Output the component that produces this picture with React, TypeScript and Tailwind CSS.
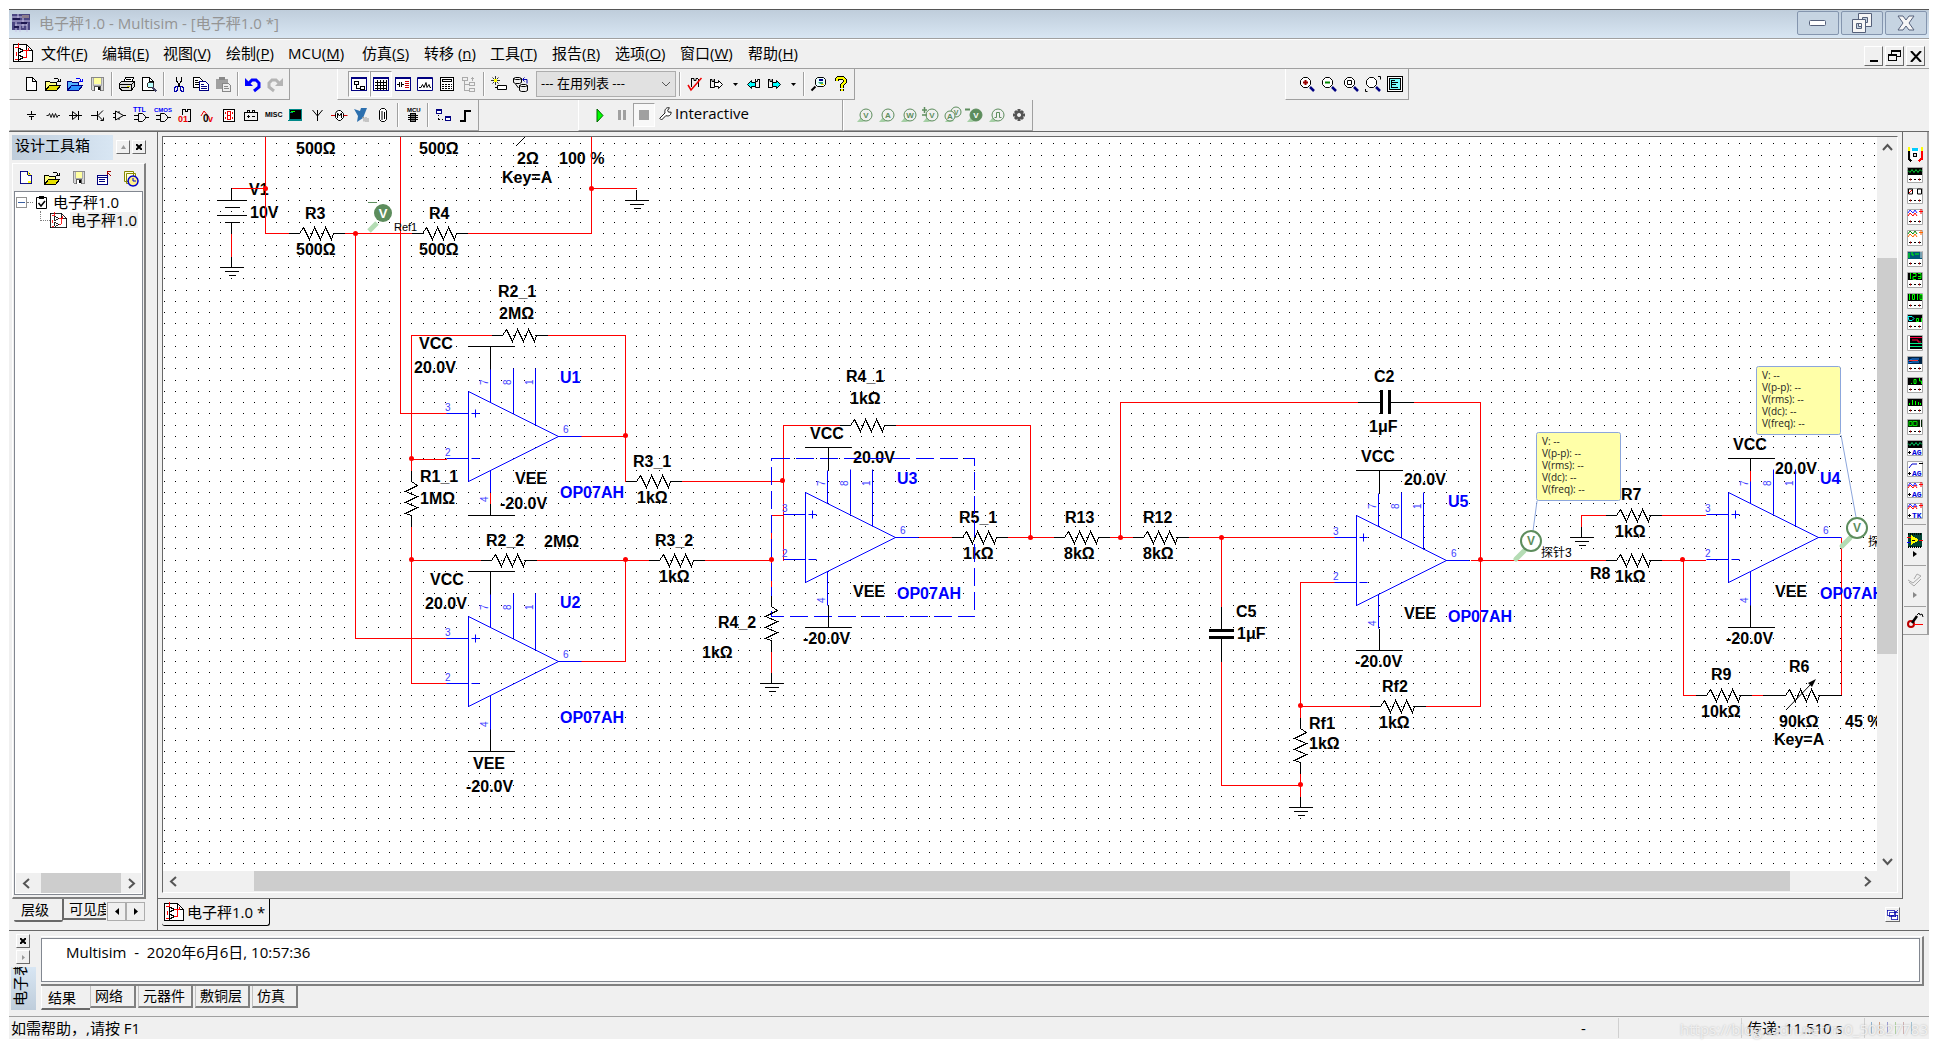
import React from "react";

type Shape = [d: string, stroke: string, fill?: string, width?: number];
type Label = [x: number, y: number, text: string, color: string, size?: number];
type IconDef = { s: Shape[]; t?: Label[]; smooth?: boolean };

const K = "#000";
const NAVY = "#000080";

const ICONS: Record<string, IconDef> = {
  fresh: { s: [["M3.5 1.5h6l4 4v9h-10z", K, "#fff"], ["M9.5 1.5v4h4", K]] },
  freshYellow: { s: [["M2.5 1.5h8l4 4v9h-12z", NAVY, "#fff"], ["M10.5 1.5v4h4", NAVY], ["M11 12h3v2h-3z", "none", "#ff0"], ["M11 2h1v2h2v1h-3z", "none", "#ff0"]] },
  open: { s: [["M.5 14.5v-9h4l1 1h6v3", K, "#ffff80"], ["M.5 14.5l4-5h11l-4 5z", K, "#e6e000"], ["M8.5 3.5l1-1h3l1 1v2", K], ["M11.5 5.5h4M15.5 2.5v3", K]] },
  openBlue: { s: [["M.5 14.5v-9h4l1 1h6v3", NAVY, "#55b4ff"], ["M.5 14.5l4-5h11l-4 5z", NAVY, "#2b95ff"], ["M8.5 3.5l1-1h3l1 1v2", "#00f"], ["M11.5 5.5h4M15.5 2.5v3", "#00f"]] },
  save: { s: [["M2.5 1.5h12v13h-11l-1-1z", "#888", "#d8d8d8"], ["M5 2h7v6h-7z", "none", "#ffffa0"], ["M4.5 2v7h8v-7", "#aaa"], ["M5.5 14.5v-4h6v4", "#555", "#fff"], ["M9 11h2v3h-2z", "none", K]] },
  print: { s: [["M4.5 6.5l2-5h8l-2 5", K, "#fff"], ["M7 3.5h5M6.5 5.5h5", K], ["M.5 7.5l2-2h13v5l-3 3.5h-10l-2-2z", K, "#ddd"], ["M.5 8.5h12l3-3M12.5 8.5v5", K], ["M2 11.5h8", K], ["M8 10h3v1h-3z", "none", "#cc0"]] },
  preview: { s: [["M1.5 1.5h7l4 4v9h-11z", K, "#fff"], ["M8.5 1.5v4h4", K], ["M7.5 6.5h4l1 1v3l-1 1h-4l-1-1v-3z", "#333", "#bff"], ["M11.5 11.5l4 4", "#446", "none", 2]] },
  cut: { s: [["M5.5 1v4l3 4v2M10.5 1v4l-3 4v2", K], ["M3.5 12.5l1-2h2v3l-1 2h-2zM9.5 10.5h2l1 2v3h-2l-1-2z", "#00a"]] },
  copy: { s: [["M.5 1.5h6l3 3v7h-9z", K, "#fff"], ["M2 4.5h3M2 6.5h5M2 8.5h4", K], ["M6.5 5.5h6l3 3v6h-9z", NAVY, "#fff"], ["M8 8.5h3M8 10.5h6M8 12.5h6", NAVY]] },
  paste: { s: [["M1 3h12v10h-12z", "none", "#a0a0a0"], ["M4 1h6v3h-6z", "none", "#888"], ["M7.5 7.5h6l2 2v6h-8z", "#888", "#eee"], ["M9 10.5h4M9 12.5h5", "#888"]] },
  undo: { s: [["M4 7l3-3h4l3 3v4l-5 4", "#00f", "none", 3], ["M0 2v8h8l-3-3z", "none", "#00f"]], smooth: true },
  redo: { s: [["M12 7l-3-3H5L2 7v4l5 4", "#b4b4b4", "none", 3], ["M16 2v8H8l3-3z", "none", "#b4b4b4"]], smooth: true },
  hierarchy: { s: [["M.5 1.5h15v13h-15z", NAVY, "#fff"], ["M.5 2.5h15", NAVY], ["M3.5 5.5h4v3h-4zM9.5 10.5h4v3h-4z", K], ["M5.5 9v3h4", K]] },
  sheet: { s: [["M.5 1.5h15v13h-15z", NAVY, "#fff"], ["M.5 2.5h15", NAVY], ["M2 6.5h12M2 9.5h12M2 12.5h12M4.5 4v10M7.5 4v10M10.5 4v10M13.5 4v10", K]] },
  spice: { s: [["M.5 1.5h15v13h-15z", NAVY, "#fff"], ["M.5 2.5h15", NAVY], ["M2 8.5h2M4.5 6v5M6.5 6v5M6.5 8.5h2", K], ["M10 5.5h4M10 7.5h4M10 9.5h4M10 11.5h4", "#c00"]] },
  grapher: { s: [["M.5 1.5h15v13h-15z", NAVY, "#fff"], ["M.5 2.5h15", NAVY], ["M2 11.5h2l1.500-3 1.500 3 2-5 1 5 2-3 1 3h1", K]], smooth: true },
  calc: { s: [["M1.5 1.5h13v13h-13z", K, "#fff"], ["M3.5 3.5h9v2h-9z", K], ["M3 8.5h2M6 8.5h2M9 8.5h2M12 8.5h1M3 10.5h2M6 10.5h2M9 10.5h2M12 10.5h1M3 12.5h2M6 12.5h2M9 12.5h2M12 12.5h1", K]] },
  tree: { s: [["M1.5 1.5h5v3h-5zM8.5 6.5h5v3h-5zM8.5 12.5h5v3h-5z", "#aaa"], ["M3.5 5v9h5M4 8.5h4", "#aaa"], ["M11.5 5v-4M9.5 3.5l2-2 2 2", "#aaa"]] },
  spark: { s: [["M4.5 0v9M0 4.5h9M1.500 1.500l6 6M7.500 1.500l-6 6", K, "none", 0.8], ["M3 3h3v3h-3z", "none", "#ff0"], ["M6.5 9.5h9v4h-9z", K, "#fff"], ["M4 11.5h3", K]], smooth: true },
  database: { s: [["M.5 2.5l2-1h4l2 1v4l-2 1h-4l-2-1zM.5 2.5l2 1h4l2-1", K, "#eee"], ["M6.5 9.5l2-1h4l2 1v5l-2 1h-4l-2-1zM6.5 9.5l2 1h4l2-1M2.5 8l3 4", K, "#eee"], ["M10 3.5h4v4M11.5 1.5l-2 2 2 2", "#00a"]], smooth: true },
  check: { s: [["M4.5 2v9M11.5 3v8M5 2.5h2v2h2v-2h2", K], ["M1 9l3 5L14.500 2", "#e00", "none", 1.5]], smooth: true },
  forward: { s: [["M1.5 3v9M5.5 3v4M1.5 3.5h1.5v2h2v-2M1.5 11.5h4v-2", K], ["M5.5 6.500h4v-2l4 4-4 4v-2h-4z", K, "#fff"]], smooth: true },
  back: { s: [["M14.5 3v9M10.5 3v4M14.5 3.5h-2v2h-2v-2M14.5 11.5h-4v-2", K], ["M10.5 6.500h-4v-2l-4 4 4 4v-2h4z", K, "#0ff"]], smooth: true },
  forwardCyan: { s: [["M1.5 3v9M5.5 3v4M1.5 3.5h1.5v2h2v-2M1.5 11.5h4v-2", K], ["M5.5 6.500h4v-2l4 4-4 4v-2h-4z", K, "#0ff"]], smooth: true },
  find: { s: [["M6.5 1.5h6l2 2v5l-2 2h-6l-2-2v-5z", K, "#e8ffff"], ["M4.5 10.5l-4 4", K, "none", 2], ["M8 3h4v2h-4z", "none", NAVY], ["M7 6h5v2h-3z", "none", "#3a7"], ["M10 8h3v1h-3z", "none", "#fd0"]], smooth: true },
  help: { s: [["M3.5 5V3.5l2-2h4l2 2v3l-3 3v2M8.5 13v2", K, "none", 4], ["M3.5 5V3.5l2-2h4l2 2v3l-3 3v2M8.5 13v2", "#ff0", "none", 2]] },
  zoomIn: { s: [["M4.5 1.5h4l3 3v4l-3 3h-4l-3-3v-4z", K, "#fff"], ["M4 6.500h5M6.5 4v5", "#900", "none", 2], ["M11 11l4 4", NAVY, "none", 2.5]], smooth: true },
  zoomOut: { s: [["M4.5 1.5h4l3 3v4l-3 3h-4l-3-3v-4z", K, "#fff"], ["M4 6.500h5", "#080", "none", 2], ["M11 11l4 4", NAVY, "none", 2.5]], smooth: true },
  zoomArea: { s: [["M4.5 1.5h4l3 3v4l-3 3h-4l-3-3v-4z", K, "#fff"], ["M4.5 4.5h4v4h-4z", K], ["M11 11l4 4", NAVY, "none", 2.5]], smooth: true },
  zoomFit: { s: [["M4.5 1.5h4l3 3v4l-3 3h-4l-3-3v-4z", K, "#fff"], ["M13 .5h2.5v3M.5 13v2.5h2", K], ["M11 11l4 4", NAVY, "none", 2.5]], smooth: true },
  fullScreen: { s: [["M.5 .5h15v15h-15z", K, "#fff"], ["M2.5 2.5h11v11h-11z", K, "#7ff"], ["M4.5 4v8M4.5 4.5h3M4.5 6.5h6M4.5 8.5h4M4.5 11.5h6", K]] },
  source: { s: [["M8.5 4v3M8.5 10v3M4 7.5h9M6 9.5h5", K]] },
  resistor: { s: [["M1.500 8.500h2l1-2 1.500 4 1.500-4 1.500 4 1.500-4 1.500 4 1-2h2", K, "none", 0.9]], smooth: true },
  diode: { s: [["M2 8.500h13M5.500 4.500v8l5-4zM11.500 4v9", K]], smooth: true },
  transistor: { s: [["M2 8.500h6M8.500 4v9M14 3.500l-5 5 5 5M11.500 13.500h3v-3", K]], smooth: true },
  analog: { s: [["M4.500 4v9l8-4.500zM2 6.500h3M2 10.500h3M12 8.500h3M8 4v2M8 11v2", K]], smooth: true },
  ttl: { s: [["M5.5 6.5h4l3 3v2l-3 3h-4zM1 8.5h4M1 12.5h4M13 10.5h3", K]], t: [[0, 5, "TTL", "#00f", 7]], smooth: true },
  cmos: { s: [["M5.5 6.5h4l3 3v2l-3 3h-4zM1 8.5h4M1 12.5h4M13 10.5h3", K]], t: [[-1, 5, "CMOS", "#00f", 6]], smooth: true },
  digital: { s: [["M5.5 8v-6M5.5 2.5h3v2h2v-2h3v12h-3", K]], t: [[1, 15, "01", "#e00", 9]] },
  mixed: { s: [["M2 9l3-5 5 6", "#e00"]], t: [[4, 15, "0", K, 10], [9, 15, "v", "#e00", 9]], smooth: true },
  indicator: { s: [["M2.5 2.5h11v12h-11z", K, "#fff"], ["M6.5 4.5h3v8h-3zM6.5 8.5h3M4.500 5v2M4.500 10v2M11.500 5v2M11.500 10v2", "#e00"]] },
  power: { s: [["M1.5 5.5h13v8h-13zM4.5 5v-1.5h2v2M9.5 5v-1.5h2v2M4 9.5h3M5.5 8v3M9 9.5h3", K]] },
  misc: { s: [], t: [[0, 10, "MISC", K, 7]] },
  peripheral: { s: [["M2.5 2.5h12v10h-12z", "#088", "#000"], ["M.5 13.5h14M3 5h3", "#088"], ["M4 4h4v1h-4z", "none", "#0f0"]] },
  rf: { s: [["M8.500 3v11M3.500 3l5 6 5-6", K]], smooth: true },
  motor: { s: [["M5.5 4.5l2-1h2l3 3v4l-3 3h-2l-3-3v-4z", K, "#fff"], ["M0 8.5h4M12.5 8.5h4", "#c00"], ["M6.5 11v-5l2 3 2-3v5", K]], smooth: true },
  ni: { s: [["M1 2l6 2 1-3 6 0-2 5-2 5-6 4 1-6z", "none", "#2c6fae"], ["M9 10.5h2v4M13 10v5M15 11v4", "#999"]], smooth: true },
  connector: { s: [["M6.5 1.5h3l2 2v9l-2 2h-3l-2-2v-9z", K, "#fff"], ["M7 4v9M9.500 5v7", K, "none"]], smooth: true },
  mcu: { s: [["M5.500 6.500h5v8h-5z", K, "#777"], ["M3 8.5h10M3 10.5h10M3 12.5h10", K]], t: [[2, 5, "MCU", K, 6]] },
  block: { s: [["M1.5 2.5h5v4h-5zM10.5 9.5h5v4h-5z", NAVY, "#fff"], ["M1 3h6M10 10h6", NAVY], ["M3.500 8v1M3.500 11v1.500h1M7 12.500h1", K]] },
  bus: { s: [["M3 14h5V4h6", K, "none", 2]] },
  wrench: { s: [["M2 14l6-6c-1-4 2-7 5-6l-2 3 1 2h3c0 4-3 5-6 4l-5 5z", K, "#fff"]], smooth: true },
  newSheet: { s: [["M1.5 5.5h10v9h-10z", NAVY, "#fff"], ["M2 7h9M3 9.5h6M3 11.5h6", NAVY], ["M15 6l-4-4M11.5 5v-3.5h3", "#900"]] },
  recent: { s: [["M1.5 1.5h9v10h-9zM3.5 3.5h9v10h-9z", "#880", "#ffd"], ["M10 6a5 5 0 1 0 .1 0z", "#00c", "#fff08a", 1.5], ["M10 8v3h3", "#00c"]], smooth: true },
  gear: { s: [["M8 2v12M2 8h12M4 4l8 8M12 4l-8 8", "#555", "none", 3], ["M8 5a3 3 0 1 0 .1 0z", "#555", "#f0f0f0", 2]], smooth: true },
  cascade: { s: [["M.5 1.5h9v7h-9zM3.5 4.5h8v6h-8zM6.5 8.5h8v6h-8z", "#00a", "#fff"], ["M15 1l-3 3M11.5 2v3h3", "#00a"]] },
};

function Icon({ name, size = 16 }: { name: string; size?: number }) {
  const def = ICONS[name];
  return (
    <svg width={size} height={size} viewBox="0 0 16 16" className="overflow-visible" shapeRendering={def.smooth ? "auto" : "crispEdges"} aria-hidden="true">
      {def.s.map(([d, stroke, fill, w], i) => (
        <path key={i} d={d} stroke={stroke} fill={fill ?? "none"} strokeWidth={w ?? 1} />
      ))}
      {def.t?.map(([x, y, text, color, size], i) => (
        <text key={i} x={x} y={y} fill={color} fontSize={size} fontWeight="bold" fontFamily="Liberation Sans, sans-serif">
          {text}
        </text>
      ))}
    </svg>
  );
}

function DocIcon({ size = 20 }: { size?: number }) {
  return (
    <svg width={size} height={size} viewBox="0 0 20 20" className="shrink-0" shapeRendering="crispEdges" aria-hidden="true">
      <path d="M.5 1.5h13l6 6v11H.5z" fill="#fff" stroke="#000" />
      <path d="M13.5 1.5v6h6" fill="none" stroke="#000" />
      <path d="M5.5 5v5l5-2.5zM5.5 12v5l5-2.5z" fill="none" stroke="#000" />
      <path d="M2 4.5h3M5.5 0v5M2 16.5h3M3 9v4M10 7.5h5v-3M10 14.5h3v-7" fill="none" stroke="#f00" />
    </svg>
  );
}

function ToolButton({ name, label, pressed }: { name: string; label: string; pressed?: boolean }) {
  return (
    <button
      aria-label={label}
      className={
        "flex h-[26px] w-[22px] shrink-0 items-center justify-center " +
        (pressed ? "border border-t-[#a0a0a0] border-r-white border-b-white border-l-[#a0a0a0] bg-[#f8f8f8]" : "")
      }
    >
      <Icon name={name} />
    </button>
  );
}

const Sep = () => <span className="mx-[3px] h-6 w-[2px] shrink-0 border-l border-[#a0a0a0] bg-white" />;

const DropArrow = ({ label }: { label: string }) => (
  <button aria-label={label} className="flex w-[14px] shrink-0 justify-center">
    <svg width="5" height="3" aria-hidden="true"><path d="M0 0h5l-2.500 3z" /></svg>
  </button>
);

const GROUP = "flex h-[31px] shrink-0 items-center border-r border-b border-l border-r-[#a0a0a0] border-b-[#a0a0a0] border-l-white";

function ProbeTool({ text, label }: { text: string; label: string }) {
  const solid = text === "-V";
  return (
    <button aria-label={label} className="flex h-[26px] w-[22px] shrink-0 items-center justify-center">
      <svg width="16" height="16" viewBox="0 0 16 16" className="overflow-visible" aria-hidden="true">
        <path d="M0 15l5-6 4 5-4 1z" fill="#a5cfa5" />
        {text === "AV" && <circle cx="11" cy="5" r="5" fill="#f0f0f0" stroke="#5d8d5d" />}
        <circle cx={text === "AV" ? 5 : 9} cy={text === "AV" ? 9 : 8} r={text === "AV" ? 5 : 6} fill={solid ? "#5d8d5d" : "#f0f0f0"} stroke="#5d8d5d" />
        {text === "pulse" ? (
          <path d="M5.500 10.500h2v-5h3v5h2" fill="none" stroke="#5d8d5d" />
        ) : (
          <text x={text === "AV" ? 5 : 9} y={text === "AV" ? 12 : 11} textAnchor="middle" fontSize="8" fontWeight="bold" fill={solid ? "#fff" : "#5d8d5d"} fontFamily="Liberation Sans, sans-serif">
            {text === "AV" ? "A" : text.replace(/[^VAW]/, "")}
          </text>
        )}
        {text === "AV" && <text x="11" y="8" textAnchor="middle" fontSize="7" fontWeight="bold" fill="#5d8d5d" fontFamily="Liberation Sans, sans-serif">V</text>}
        {text === "±V" && <path d="M-1 3h5M1.500 0v6M-1 8h5" stroke="#5d8d5d" strokeWidth="1.500" />}
        {solid && <path d="M-2 2.500h5" stroke="#5d8d5d" strokeWidth="2" />}
      </svg>
    </button>
  );
}

/* ---------- instrument strip ---------- */

type Instrument = { name: string; bg: string; fg: string; d: string; d2?: string; fg2?: string; tag?: string };
const INSTRUMENTS: Instrument[] = [
  { name: "Function generator", bg: "#000", fg: "#0c3", d: "M1 3.500l2 2 2-3 2 3 2-3 2 3 2-3 2 2" },
  { name: "Wattmeter", bg: "#fff", fg: "#000", d: "M1.500 1v5h4v-5zM10.500 1v5h4v-5z", d2: "M2 5l3-3", fg2: "#e00" },
  { name: "Oscilloscope", bg: "#fff", fg: "#22f", d: "M1 4l2-3 3 3 2-3 2 3", d2: "M1 7l2-3 3 3 2-3 2 3M12 2.500h4M14 0v5", fg2: "#f00" },
  { name: "Four channel oscilloscope", bg: "#fff", fg: "#080", d: "M1 4l2-3 3 3 2-3 2 3", d2: "M1 7l2-3 3 3 2-3 2 3M12 2.500h4M14 0v5", fg2: "#f60" },
  { name: "Bode plotter", bg: "#057", fg: "#0f0", d: "M2 2v5M5 1v3h2M8 3h4", d2: "M14 0v7", fg2: "#eee" },
  { name: "Frequency counter", bg: "#000", fg: "#0f0", d: "M3.500 1v6M6 1.500h3v3h-3v3h3M11 1.500h3v5h-3M11 4.500h3" },
  { name: "Word generator", bg: "#000", fg: "#0f0", d: "M2.500 1v6M5.500 1.500h2v5h-2zM10.500 1v6M13 1.500h2v5h-2z" },
  { name: "Logic converter", bg: "#000", fg: "#0ff", d: "M1 2.500h4l2 2-2 2H2z", d2: "M9.500 4.500h2v3h-2zM14.500 4v4", fg2: "#0f0" },
  { name: "Logic analyzer", bg: "#000", fg: "#f04", d: "M3 2.500h12M5 5h6v2h3", d2: "M3 8.500h12M3 11.500h12", fg2: "#0e8" },
  { name: "IV analyzer", bg: "#024", fg: "#28f", d: "M1 5l4-2h7M1 7l5-1h6", d2: "M2 4.500h9", fg2: "#e33" },
  { name: "Distortion analyzer", bg: "#000", fg: "#0f0", d: "M4 6.500h1M7 2.500h2v4h-2zM12.500 1v3h2v3" },
  { name: "Spectrum analyzer", bg: "#000", fg: "#0f0", d: "M2.500 7v-2M5.500 7v-5M8.500 7v-4M11.500 7v-3M13.500 7v-2" },
  { name: "Network analyzer", bg: "#020", fg: "#0d0", d: "M2 2.500h3v4h-3zM6 2.500h4v4h-4z", d2: "M13.500 0v8", fg2: "#eee" },
  { name: "Agilent function generator", bg: "#000", fg: "#0c6", d: "M1 3.500l2 2 2-3 2 3 2-3 2 3 2-3 2 2", tag: "AG" },
  { name: "Agilent multimeter", bg: "#fff", fg: "#00c", d: "M2 7l3-4h5", d2: "M12 2.500h4", fg2: "#000", tag: "AG" },
  { name: "Agilent oscilloscope", bg: "#fff", fg: "#22f", d: "M1 4l2-3 3 3 2-3 2 3", d2: "M1 6l2-3 3 3 2-3 2 3M12 2.500h4M14 0v5", fg2: "#f00", tag: "AG" },
  { name: "Tektronix oscilloscope", bg: "#fff", fg: "#22f", d: "M1 4l2-3 3 3 2-3 2 3", d2: "M1 6l2-3 3 3 2-3 2 3M12 2.500h4M14 0v5", fg2: "#f00", tag: "TK" },
];

function InstrumentStrip() {
  return (
    <aside className="w-[26px] shrink-0">
      <div className="flex h-[503px] flex-col items-center border-r-2 border-b border-[#a0a0a0] pt-[11px]">
        <button aria-label="Multimeter" className="flex h-[21px] items-center">
          <svg width="16" height="16" viewBox="0 0 16 16" shapeRendering="crispEdges" aria-hidden="true">
            <path d="M4 3h8v11H4z" fill="#fff" />
            <path d="M5 2h6v3H5z" fill="#0cf" />
            <path d="M6.500 7.500h3v3h-3z" stroke="#000" fill="#ddd" />
            <path d="M1.500 5v8l3 2" stroke="#000" strokeWidth="2" fill="none" />
            <path d="M14.500 5v8l-3 2" stroke="#f00" strokeWidth="2" fill="none" />
            <path d="M1.500 1v4M14.500 1v4" stroke="#ff0" strokeWidth="2" />
          </svg>
        </button>
        {INSTRUMENTS.map((it) => (
          <button key={it.name} aria-label={it.name} className="flex h-[21px] items-center">
            <svg width="16" height="16" viewBox="0 0 16 16" aria-hidden="true">
              <path d="M.5 .5h15v15H.5z" fill="#fff" stroke="#a8a8a8" />
              <path d={it.name === "Logic analyzer" ? "M3 1h12v13H3z" : "M1 1h14v7H1z"} fill={it.bg} />
              <path d={it.d} stroke={it.fg} fill="none" />
              {it.d2 && <path d={it.d2} stroke={it.fg2} fill="none" />}
              {it.tag ? (
                <>
                  <path d="M1 12.500h3M2.500 11v3" stroke="#000" />
                  <text x="5" y="15" fontSize="8" fontWeight="bold" fill="#00d" fontFamily="Liberation Mono, monospace">{it.tag}</text>
                </>
              ) : it.name !== "Logic analyzer" ? (
                <>
                  <path d="M2 12.500h3M7 12.500h2M11 12.500h3" stroke="#000" />
                  <path d="M3 11.500h1v2H3zM12 11.500h1v2h-1z" fill="#a00" />
                </>
              ) : null}
            </svg>
          </button>
        ))}
        <hr className="mt-[3px] w-[22px] border-[#a0a0a0]" />
        <button aria-label="LabVIEW instruments" className="mt-[7px]">
          <svg width="16" height="16" viewBox="0 0 16 16" shapeRendering="crispEdges" aria-hidden="true">
            <path d="M1 1h14v14H1z" fill="#043" />
            <path d="M1 1.500h14M1 14.500h14" stroke="#000" strokeDasharray="1 1" strokeWidth="2" />
            <path d="M4 3v10l8-5z" fill="#ff0" />
            <path d="M0 5.500h4M12 8.500h4" stroke="#f00" />
            <path d="M0 10.500h4" stroke="#00f" />
            <path d="M5 8h3" stroke="#000" />
          </svg>
        </button>
        <button aria-label="More LabVIEW instruments" className="flex h-3 items-center"><svg width="4" height="6" aria-hidden="true"><path d="M0 0l4 3-4 3z" /></svg></button>
        <hr className="mt-[5px] w-[22px] border-[#a0a0a0]" />
        <button aria-label="ELVIS instruments" className="mt-[7px]">
          <svg width="16" height="16" viewBox="0 0 16 16" aria-hidden="true"><path d="M1 7l5 3 8-7-4-2-3 5M2 9l5 4 7-7" fill="none" stroke="#aaa" /></svg>
        </button>
        <button aria-label="More ELVIS instruments" className="flex h-3 items-center"><svg width="4" height="6" aria-hidden="true"><path d="M0 0l4 3-4 3z" fill="#888" /></svg></button>
        <hr className="mt-[5px] w-[22px] border-[#a0a0a0]" />
        <button aria-label="Current clamp" className="mt-[6px]">
          <svg width="18" height="16" viewBox="0 0 18 16" aria-hidden="true">
            <circle cx="5" cy="11" r="3" fill="none" stroke="#b00" strokeWidth="2" />
            <path d="M6 10l5-7" stroke="#000" strokeWidth="2.500" />
            <path d="M8 11.500h9" stroke="#f00" />
            <path d="M11 2l2-2 1 2 2-1 1 3" stroke="#000" fill="none" />
          </svg>
        </button>
      </div>
    </aside>
  );
}

/* ---------- schematic ---------- */

const H = (x: number, y: number) => `M${x} ${y}h11l4-6 6 12 5-12 6 12 5-12 6 12 2-6h11`;
const V = (x: number, y: number) => `M${x} ${y}v11l6 4-12 6 12 5-12 6 12 5-12 6 6 2v11`;
const G = (x: number, y: number) => `M${x} ${y - 11}v11M${x - 12} ${y}h24M${x - 7} ${y + 4}h14M${x - 3} ${y + 8}h7`;

const WIRES = [
  "M265 130V233H288M231 188H265M231 233V258",
  "M400 130V413H446M355 233V638H446M344 233H411M467 233H591M591 130V233M591 188H636",
  "M491 335H411V470M411 459H446M546 335H625V481M580 436H625M681 481H783",
  "M411 526V683H446M411 560H480M535 560H648M625 560V661H580M704 560H771",
  "M783 515H771V605M839 425H783V560M895 425H1030V537M918 537H951M1007 537H1054M1109 537H1132M1188 537H1335",
  "M771 651V672M1120 537V402H1357M1413 402H1480V706H1424M1470 560H1605M1221 537V606M1221 661V785H1300",
  "M1335 582H1300V717M1300 706H1369M1300 773V797",
  "M1605 515H1581V526M1661 515H1705M1661 560H1705M1683 560V695H1695M1750 695H1762M1841 695V537M490 492V503M1750 470V481",
].join("");

const PARTS = [
  H(288, 233), H(411, 233), H(491, 335), H(625, 481), H(480, 560), H(648, 560), H(839, 425), H(951, 537),
  H(1053, 537), H(1132, 537), H(1369, 706), H(1605, 515), H(1605, 560), H(1695, 695), H(1774, 695),
  V(411, 470), V(771, 595), V(1300, 717),
  G(231, 267), G(636, 200), G(771, 683), G(1300, 807), G(1581, 537),
  "M231 188V200M216 200H246M224 207H239M216 215H246M224 222H239M231 222V233M515 146L525 136",
  "M1357 402H1380M1390 402H1413M1221 606V630M1221 638V661M1762 695H1774M1830 695H1841",
  "M468 346H514M490 346V369M468 515H514M490 503V515",
  "M468 571H514M490 571V594M468 751H514M490 728V751",
  "M805 447H851M828 447V470M805 627H851M828 605V627",
  "M1356 470H1402M1379 470V493M1356 650H1402M1379 628V650",
  "M1728 458H1774M1750 458V470M1728 627H1774M1750 605V627",
].join("");

const DOTS: [number, number][] = [
  [265, 188], [591, 188], [355, 233], [411, 458], [625, 435], [782, 480], [411, 559], [625, 559], [771, 559],
  [1030, 537], [1120, 537], [1221, 537], [1480, 559], [1300, 705], [1300, 784], [1682, 559],
];

const LABELS: [number, number, string][] = [
  [296, 154, "500Ω"], [419, 154, "500Ω"], [517, 164, "2Ω"], [559, 164, "100 %"], [502, 183, "Key=A"],
  [249, 195, "V1"], [250, 218, "10V"], [305, 219, "R3"], [429, 219, "R4"], [296, 255, "500Ω"], [419, 255, "500Ω"],
  [498, 297, "R2_1"], [499, 319, "2MΩ"], [419, 349, "VCC"], [414, 373, "20.0V"], [633, 467, "R3_1"], [637, 503, "1kΩ"],
  [420, 482, "R1_1"], [420, 504, "1MΩ"], [515, 484, "VEE"], [500, 509, "-20.0V"],
  [486, 546, "R2_2"], [544, 547, "2MΩ"], [655, 546, "R3_2"], [659, 582, "1kΩ"], [430, 585, "VCC"], [425, 609, "20.0V"],
  [718, 628, "R4_2"], [702, 658, "1kΩ"], [473, 769, "VEE"], [466, 792, "-20.0V"],
  [846, 382, "R4_1"], [850, 404, "1kΩ"], [810, 439, "VCC"], [853, 463, "20.0V"], [959, 523, "R5_1"], [963, 559, "1kΩ"],
  [1065, 523, "R13"], [1064, 559, "8kΩ"], [1143, 523, "R12"], [1143, 559, "8kΩ"], [853, 597, "VEE"], [803, 644, "-20.0V"],
  [1374, 382, "C2"], [1369, 432, "1μF"], [1361, 462, "VCC"], [1404, 485, "20.0V"], [1404, 619, "VEE"], [1355, 667, "-20.0V"],
  [1236, 617, "C5"], [1237, 639, "1μF"], [1382, 692, "Rf2"], [1379, 728, "1kΩ"], [1309, 729, "Rf1"], [1309, 749, "1kΩ"],
  [1621, 500, "R7"], [1615, 537, "1kΩ"], [1590, 579, "R8"], [1615, 582, "1kΩ"], [1733, 450, "VCC"], [1775, 474, "20.0V"],
  [1775, 597, "VEE"], [1726, 644, "-20.0V"], [1711, 680, "R9"], [1701, 717, "10kΩ"], [1789, 672, "R6"], [1779, 727, "90kΩ"],
  [1845, 727, "45 %"], [1774, 745, "Key=A"],
];

const OPAMPS: [string, number, number][] = [["U1", 468, 391], ["U2", 468, 616], ["U3", 805, 492], ["U5", 1356, 515], ["U4", 1728, 492]];

function OpAmp({ name, x, y }: { name: string; x: number; y: number }) {
  const pin7 = name === "U4" ? "M22 -11V11" : "M22 -22V11";
  return (
    <g transform={`translate(${x} ${y})`}>
      <path
        d={`M0 0V90L90 45ZM-22 22H0M-22 67H0M90 45H113${pin7}M45 -23V22M67 -23V34M22 79V${name === "U1" ? 101 : 113}M3 22H11M7 18V26M3 67H11`}
        transform="translate(.5 .5)"
        fill="none"
        stroke="#00f"
      />
      <g fill="#4040ff" fontSize="10">
        <text x="-23" y="20">3</text>
        <text x="-23" y="65">2</text>
        <text x="95" y="42">6</text>
        <text transform="translate(20 -6) rotate(-90)">7</text>
        <text transform="translate(43 -6) rotate(-90)">8</text>
        <text transform="translate(65 -6) rotate(-90)">1</text>
        <text transform="translate(20 111) rotate(-90)">4</text>
      </g>
      <g fill="#00f" fontSize="16" fontWeight="bold">
        <text x="92" y="-8">{name}</text>
        <text x="92" y="107">OP07AH</text>
      </g>
    </g>
  );
}

const READINGS = ["V: --", "V(p-p): --", "V(rms): --", "V(dc): --", "V(freq): --"];

function Callout({ x, y }: { x: number; y: number }) {
  return (
    <g>
      <rect x={x + 0.5} y={y + 0.5} width="84" height="68" rx="2" fill="#ffffa8" stroke="#8ca6dc" />
      {READINGS.map((line, i) => (
        <text key={line} x={x + 6} y={y + 13 + i * 12} fontSize="10" fill="#222" fontFamily="Open Sans, sans-serif">{line}</text>
      ))}
    </g>
  );
}

function Probe({ x, y }: { x: number; y: number }) {
  return (
    <g>
      <path d={`M${x - 15} ${y + 18}l8-8`} stroke="#b4dcb4" strokeWidth="5" strokeLinecap="round" />
      <circle cx={x} cy={y} r="10" fill="#fff" stroke="#5d8d5d" strokeWidth="2" />
      <text x={x} y={y + 4} fontSize="12" fontWeight="bold" textAnchor="middle" fill="#5d8d5d">V</text>
    </g>
  );
}

const GRID_X = [0, 11, 22, 34];
const GRID_Y = [0, 12, 23, 34];

function Schematic() {
  return (
    <svg className="absolute inset-0 size-full" role="img" aria-label="Schematic" fontFamily="Liberation Sans, Noto Sans CJK SC, sans-serif">
      <g transform="translate(-163 -137)">
        <defs>
          <pattern id="grid" x="164" y="143" width="45" height="45" patternUnits="userSpaceOnUse">
            {GRID_X.flatMap((gx) => GRID_Y.map((gy) => <rect key={`${gx}-${gy}`} x={gx} y={gy} width="1" height="1" fill="#000" />))}
          </pattern>
        </defs>
        <rect x="160" y="130" width="4000" height="3000" fill="url(#grid)" />
        <g fontSize="16" fontWeight="bold">
          {LABELS.map(([x, y, t]) => (
            <text key={`${x}-${y}`} x={x} y={y}>{t}</text>
          ))}
        </g>
        <g shapeRendering="crispEdges" fill="none">
          <path d={WIRES} stroke="#f00" transform="translate(.5 .5)" />
          <path d="M771 458H974V616H771Z" stroke="#00f" strokeDasharray="18 6" transform="translate(.5 .5)" />
          <path d={PARTS} stroke="#000" transform="translate(.5 .5)" />
          <path d="M1381.500 390V414M1389.500 390V414M1209 630.500H1234M1209 637.500H1234" stroke="#000" strokeWidth="3" />
        </g>
        <path d="M1786 710L1812 683" stroke="#000" />
        <path d="M1816 679l-8 4 4 4z" />
        {OPAMPS.map(([name, x, y]) => (
          <OpAmp key={name} name={name} x={x} y={y} />
        ))}
        {DOTS.map(([x, y]) => (
          <circle key={`${x}-${y}`} cx={x + 0.5} cy={y + 0.5} r="2.500" fill="#f00" />
        ))}
        <path d="M369 231l8-8" stroke="#b4dcb4" strokeWidth="5" />
        <circle cx="383" cy="213" r="9" fill="#5d8d5d" />
        <text x="383" y="218" fontSize="13" fontWeight="bold" textAnchor="middle" fill="#fff">V</text>
        <path d="M368 202.500h9" stroke="#5d8d5d" />
        <text x="394" y="231" fontSize="11">Ref1</text>
        <path d="M1537 501L1533 531M1841 435L1856 517" stroke="#8ca6dc" />
        <Callout x={1536} y={432} />
        <Callout x={1756} y={366} />
        <Probe x={1531} y={541} />
        <Probe x={1857} y={528} />
        <text x="1541" y="557" fontSize="12">探针3</text>
        <text x="1868" y="546" fontSize="12">探针4</text>
      </g>
    </svg>
  );
}

/* ---------- scroll bars ---------- */

function Chevron({ dir }: { dir: "up" | "down" | "left" | "right" }) {
  const d = { up: "M1 8l4.500-5 4.500 5", down: "M1 3l4.500 5 4.500-5", left: "M8 1L3 5.500 8 10", right: "M3 1l5 4.500-5 4.500" }[dir];
  return (
    <button aria-label={`Scroll ${dir}`} className="flex size-5 shrink-0 items-center justify-center">
      <svg width="11" height="11" aria-hidden="true"><path d={d} fill="none" stroke="#555" strokeWidth="2" /></svg>
    </button>
  );
}

/* ---------- window ---------- */

const MENUS: [string, string, string][] = [
  ["文件(", "F", "w-[61px]"], ["编辑(", "E", "w-[61px]"], ["视图(", "V", "w-[63px]"], ["绘制(", "P", "w-[62px]"], ["MCU(", "M", "w-[74px]"],
  ["仿真(", "S", "w-[62px]"], ["转移 (", "n", "w-[66px]"], ["工具(", "T", "w-[62px]"], ["报告(", "R", "w-[63px]"], ["选项(", "O", "w-[65px]"],
  ["窗口(", "W", "w-[68px]"], ["帮助(", "H", "w-[61px]"],
];

const COMPONENT_TOOLS = [
  "source", "resistor", "diode", "transistor", "analog", "ttl", "cmos", "digital", "mixed", "indicator", "power", "misc",
  "peripheral", "rf", "motor", "ni", "connector",
];

const RAISED = "border border-t-white border-r-[#696969] border-b-[#696969] border-l-white bg-[#f0f0f0]";

function CaptionButton({ label, children }: { label: string; children: React.ReactNode }) {
  return (
    <button aria-label={label} className="flex h-6 w-[42px] items-center justify-center rounded-[2px] border border-[#8495ae] bg-[#c6d4e2]">
      {children}
    </button>
  );
}

function TitleBar() {
  return (
    <header className="flex h-[30px] items-center border-t border-b border-t-[#555] border-b-[#a0a0a0] bg-linear-to-b from-[#bfcddb] to-[#d8e6f3] pr-[2px] pb-[2px] pl-[3px]">
      <svg width="18" height="18" viewBox="0 0 18 18" aria-hidden="true">
        <path d="M0 0h18v16H0z" fill="#4b4682" />
        <path d="M0 3h13M0 7h18M3 11h12M6 0v4M11 4v10M4 8v10M15 9v9M8 12v6" stroke="#c9c3e6" fill="none" />
        <path d="M1 5h7M9 9h6M2 13h5" stroke="#1d1750" strokeWidth="2" />
        <path d="M10 1h7v3h-7z" fill="#8d7d8d" />
      </svg>
      <h1 className="ml-[9px] flex-1 text-[15px] leading-5 whitespace-pre text-[#949494]">电子秤1.0 - Multisim - [电子秤1.0 *]</h1>
      <div className="flex gap-[2px]">
        <CaptionButton label="Minimize">
          <svg width="18" height="7" aria-hidden="true"><rect x=".5" y=".5" width="16" height="5" rx="1" fill="#fff" stroke="#55607a" /></svg>
        </CaptionButton>
        <CaptionButton label="Restore">
          <svg width="22" height="21" aria-hidden="true" fillRule="evenodd" fill="#f6f6f6" stroke="#55607a">
            <path d="M7.500 .5h13v13h-13zM11.500 4.500v5h5v-5z" />
            <path d="M1.500 6.500h13v13h-13zM5.500 10.500v5h5v-5z" />
          </svg>
        </CaptionButton>
        <CaptionButton label="Close">
          <svg width="18" height="16" aria-hidden="true"><path d="M1 1h5l3 4 3-4h5l-5 7 5 7h-5l-3-4-3 4H1l5-7z" fill="#f6f6f6" stroke="#55607a" /></svg>
        </CaptionButton>
      </div>
    </header>
  );
}

function MenuBar() {
  return (
    <nav className="flex h-[30px] items-center border-t border-b border-t-white border-b-[#a0a0a0] pb-[2px] pl-1">
      <DocIcon />
      <div className="ml-2 flex flex-1">
        {MENUS.map(([text, key, width]) => (
          <button key={text} className={`${width} text-left text-[15px] leading-5 whitespace-pre`}>
            {text}<span className="underline">{key}</span>)
          </button>
        ))}
      </div>
      <div className="mr-1 flex gap-[2px] self-end">
        <button aria-label="Minimize document" className={`${RAISED} flex h-5 w-[19px] items-end justify-center pb-[3px]`}>
          <svg width="8" height="2" aria-hidden="true"><path d="M0 0h8v2H0z" /></svg>
        </button>
        <button aria-label="Restore document" className={`${RAISED} flex h-5 w-[19px] items-center justify-center`}>
          <svg width="13" height="12" shapeRendering="crispEdges" aria-hidden="true" fill="none" stroke="#000">
            <path d="M3.500 4V.5h9v6H9M3 1.500h10M.5 4.500h8v6h-8zM0 5.500h9" />
          </svg>
        </button>
        <button aria-label="Close document" className={`${RAISED} flex h-5 w-[19px] items-center justify-center`}>
          <svg width="12" height="11" aria-hidden="true"><path d="M1 0l10 11M11 0L1 11" stroke="#000" strokeWidth="2" /></svg>
        </button>
      </div>
    </nav>
  );
}

function Toolbars() {
  return (
    <>
      <div className="flex">
        <div className={`${GROUP} pr-[3px] pl-[10px]`} role="toolbar" aria-label="Standard">
          <ToolButton name="fresh" label="New" /><ToolButton name="open" label="Open" /><ToolButton name="openBlue" label="Open sample" /><ToolButton name="save" label="Save" />
          <Sep /><ToolButton name="print" label="Print" /><ToolButton name="preview" label="Print preview" />
          <Sep /><ToolButton name="cut" label="Cut" /><ToolButton name="copy" label="Copy" /><ToolButton name="paste" label="Paste" />
          <Sep /><ToolButton name="undo" label="Undo" /><ToolButton name="redo" label="Redo" />
        </div>
        <div className={`${GROUP} ml-[47px] pr-[2px] pl-[10px]`} role="toolbar" aria-label="Main">
          <ToolButton name="hierarchy" label="Design toolbox" pressed /><ToolButton name="sheet" label="Spreadsheet view" pressed />
          <ToolButton name="spice" label="SPICE netlist" /><ToolButton name="grapher" label="Grapher" /><ToolButton name="calc" label="Postprocessor" /><ToolButton name="tree" label="Parent sheet" />
          <Sep /><ToolButton name="spark" label="Component wizard" /><ToolButton name="database" label="Database manager" />
          <span className="relative ml-1 flex">
            <select aria-label="在用列表" className="h-[26px] w-[140px] shrink-0 appearance-none border border-[#adadad] bg-[#e1e1e1] pr-5 pl-1 text-[13px]" defaultValue="list">
              <option value="list">--- 在用列表 ---</option>
            </select>
            <svg width="10" height="7" className="pointer-events-none absolute top-[10px] right-[5px]" aria-hidden="true"><path d="M1 1l4 4 4-4" fill="none" stroke="#555" /></svg>
          </span>
          <Sep /><ToolButton name="check" label="Electrical rules check" /><ToolButton name="forward" label="Transfer" /><DropArrow label="Transfer options" />
          <ToolButton name="back" label="Back annotate" /><ToolButton name="forwardCyan" label="Forward annotate" /><DropArrow label="Annotate options" />
          <Sep /><ToolButton name="find" label="Find" /><ToolButton name="help" label="Help" />
        </div>
        <div className={`${GROUP} ml-[430px] pr-[2px] pl-[10px]`} role="toolbar" aria-label="View">
          <ToolButton name="zoomIn" label="Zoom in" /><ToolButton name="zoomOut" label="Zoom out" /><ToolButton name="zoomArea" label="Zoom area" />
          <ToolButton name="zoomFit" label="Zoom fit" /><ToolButton name="fullScreen" label="Full screen" />
        </div>
      </div>
      <div className="flex border-b border-[#696969]">
        <div className={`${GROUP} pr-[2px] pl-[10px]`} role="toolbar" aria-label="Components">
          {COMPONENT_TOOLS.map((name) => <ToolButton key={name} name={name} label={name} />)}
          <Sep /><ToolButton name="mcu" label="MCU" /><Sep /><ToolButton name="block" label="Hierarchical block" /><ToolButton name="bus" label="Bus" />
        </div>
        <div className={`${GROUP} ml-[99px] w-[265px] pl-[10px]`} role="toolbar" aria-label="Simulation">
          <button aria-label="Run" className="flex w-[22px] justify-center"><svg width="8" height="13" aria-hidden="true"><path d="M1 0l6 6.500L1 13z" fill="#0f0" stroke="#060" /></svg></button>
          <button aria-label="Pause" className="flex w-[22px] justify-center"><svg width="8" height="10" aria-hidden="true"><path d="M0 0h3v10H0zM5 0h3v10H5z" fill="#a0a0a0" /></svg></button>
          <button aria-label="Stop" className="flex h-6 w-[22px] items-center justify-center border border-t-[#a0a0a0] border-r-white border-b-white border-l-[#a0a0a0] bg-[#f8f8f8]">
            <svg width="10" height="10" aria-hidden="true"><path d="M0 0h10v10H0z" fill="#a0a0a0" /></svg>
          </button>
          <button className="ml-[3px] flex items-center gap-[3px] pb-[5px] text-[15px] leading-5"><Icon name="wrench" size={14} />Interactive</button>
        </div>
        <div className={`${GROUP} pr-[2px] pl-[10px]`} role="toolbar" aria-label="Probes">
          <ProbeTool text="V" label="Voltage probe" /><ProbeTool text="A" label="Current probe" /><ProbeTool text="W" label="Power probe" />
          <ProbeTool text="±V" label="Differential probe" /><ProbeTool text="AV" label="Voltage and current probe" /><ProbeTool text="-V" label="Reference probe" />
          <ProbeTool text="pulse" label="Digital probe" /><ToolButton name="gear" label="Probe settings" />
        </div>
      </div>
    </>
  );
}

function DesignToolbox() {
  return (
    <aside className="flex w-[148px] shrink-0 flex-col pt-[3px] pl-[3px]">
      <div className="flex h-[25px]">
        <h2 className="w-[101px] bg-linear-to-r from-[#bfcddb] to-[#d8e6f3] pl-[3px] text-[15px] leading-[20px]">设计工具箱</h2>
        <button aria-label="Collapse" className={`${RAISED} mt-[5px] ml-[3px] flex h-[14px] w-[14px] items-center justify-center`}><svg width="5" height="4" aria-hidden="true"><path d="M0 4h5l-2.500-4z" fill="#999" /></svg></button>
        <button aria-label="Close toolbox" className={`${RAISED} mt-[5px] ml-[2px] flex h-[14px] w-[14px] items-center justify-center`}><svg width="6" height="6" aria-hidden="true"><path d="M0 0l6 6M6 0L0 6" stroke="#000" strokeWidth="2" /></svg></button>
      </div>
      <div className="mt-[3px] flex w-[134px] flex-1 flex-col border-t border-r-2 border-b-2 border-l border-t-white border-r-[#808080] border-b-[#808080] border-l-white px-[1px] pb-[2px]">
        <div className="flex h-[27px] items-center justify-between px-[4px]">
          <button aria-label="New design"><Icon name="freshYellow" size={15} /></button>
          <button aria-label="Open design"><Icon name="open" /></button>
          <button aria-label="Save design"><Icon name="save" size={15} /></button>
          <button aria-label="Close design"><Icon name="newSheet" /></button>
          <button aria-label="Recent designs"><Icon name="recent" /></button>
        </div>
        <div className="flex flex-1 flex-col border border-[#828790] bg-white p-[1px] text-[15px] leading-[18px]">
          <ul className="flex-1">
            <li>
              <div className="flex h-[18px] items-center">
                <button aria-label="Collapse tree" className="flex size-[11px] shrink-0 items-center justify-center border border-[#919191] bg-white"><span className="h-px w-[7px] bg-[#3a5fa0]" /></button>
                <span className="w-[6px] border-t border-dotted border-[#808080]" />
                <svg width="13" height="14" className="mx-[2px]" aria-hidden="true"><path d="M1.500 2.500h10v11h-10z" fill="#fff" stroke="#000" /><path d="M4 1h5v3H4z" /><path d="M3.500 8l2.500 3 4-5" fill="none" stroke="#000" strokeWidth="1.500" /></svg>
                <span className="ml-[3px] leading-[16px]">电子秤1.0</span>
              </div>
              <ul>
                <li className="flex h-[18px] items-center pl-6">
                  <span className="mb-[9px] h-[10px] w-[10px] border-b border-l border-dotted border-[#808080]" />
                  <DocIcon size={17} />
                  <span className="ml-[3px] bg-[#f0f0f0] px-[1px] leading-[16px] whitespace-nowrap">电子秤1.0</span>
                </li>
              </ul>
            </li>
          </ul>
          <div className="flex h-5 bg-[#f0f0f0]"><Chevron dir="left" /><span className="ml-[5px] flex-1 bg-[#cdcdcd]" /><Chevron dir="right" /></div>
        </div>
      </div>
      <div className="flex h-[31px] w-[134px] items-start pl-[2px] text-[14px] leading-[20px]" role="tablist">
        <button role="tab" aria-selected="true" className="h-[23px] w-[49px] rounded-b-[2px] border-r border-b-2 border-[#696969] bg-[#f0f0f0] pt-[1px] pr-[6px]">层级</button>
        <button role="tab" aria-selected="false" className="h-[21px] w-[43px] overflow-hidden border-b-2 border-l border-[#696969] pl-[5px] text-left leading-[18px] whitespace-nowrap">可见度</button>
        <button aria-label="Previous tab" className="mt-[3px] ml-[1px] flex h-[19px] w-[19px] items-center justify-center border border-[#adadad]"><svg width="4" height="7" aria-hidden="true"><path d="M4 0v7L0 3.500z" /></svg></button>
        <button aria-label="Next tab" className="mt-[3px] flex h-[19px] w-[19px] items-center justify-center border border-[#adadad]"><svg width="4" height="7" aria-hidden="true"><path d="M0 0v7l4-3.500z" /></svg></button>
      </div>
    </aside>
  );
}

function Workspace() {
  return (
    <main className="flex min-w-0 flex-1 flex-col border-l border-l-[#696969]">
      <div className="flex flex-1 border-r border-b border-[#696969] pt-1 pr-1 pb-[5px] pl-1">
        <div className="flex flex-1 flex-col border-t border-r border-b border-l border-t-[#696969] border-r-white border-b-white border-l-[#696969]">
          <div className="flex flex-1">
            <div className="relative flex-1 overflow-hidden bg-white"><Schematic /></div>
            <div className="flex w-5 flex-col bg-[#f0f0f0]">
              <Chevron dir="up" /><span className="flex-[101]" /><span className="flex-[396] bg-[#cdcdcd]" /><span className="flex-[197]" /><Chevron dir="down" />
            </div>
          </div>
          <div className="flex h-[21px] bg-[#f0f0f0] pr-5 pb-[1px]">
            <Chevron dir="left" /><span className="flex-[71]" /><span className="flex-[1535] bg-[#cdcdcd]" /><span className="flex-[67]" /><Chevron dir="right" />
          </div>
        </div>
      </div>
      <div className="flex h-[31px] items-start justify-between pr-[3px] pl-1">
        <button className="flex h-[27px] items-center gap-[3px] rounded-b-[3px] border-r border-b border-black bg-[#f0f0f0] pr-[4px] pl-[2px] text-[15px] leading-5 whitespace-pre">
          <DocIcon />电子秤1.0 *
        </button>
        <button aria-label="Window list" className={`${RAISED} mt-2 flex size-[15px] items-center justify-center`}><Icon name="cascade" size={12} /></button>
      </div>
    </main>
  );
}

const RESULT_TABS: [string, string][] = [["网络", "w-[46px]"], ["元器件", "w-[55px]"], ["敷铜层", "w-[55px]"], ["仿真", "w-[46px]"]];

function ResultsPane() {
  return (
    <section className="flex h-[86px] border-t border-[#696969]">
      <div className="flex w-8 flex-col items-start pt-[3px] pl-[2px]">
        <button aria-label="Close results" className={`${RAISED} ml-[5px] flex h-[14px] w-[14px] items-center justify-center`}><svg width="6" height="6" aria-hidden="true"><path d="M0 0l6 6M6 0L0 6" stroke="#000" strokeWidth="2" /></svg></button>
        <button aria-label="Expand results" className={`${RAISED} mt-[2px] ml-[5px] flex h-[14px] w-[14px] items-center justify-center`}><svg width="3" height="5" aria-hidden="true"><path d="M0 0v5l3-2.500z" fill="#999" /></svg></button>
        <h2 className="mt-[3px] h-[43px] w-[25px] rotate-180 overflow-hidden bg-linear-to-b from-[#bfcddb] to-[#d8e6f3] pt-[4px] text-[15px] leading-[18px] whitespace-nowrap [text-orientation:sideways] [writing-mode:vertical-rl]">电子表</h2>
      </div>
      <div className="min-w-0 flex-1 pt-[5px] pr-[5px]">
        <div className="border-t border-r-2 border-b-2 border-t-white border-r-[#808080] border-b-[#808080] pt-[1px] pr-[2px] pb-[2px]">
          <output className="block h-[44px] border border-[#828790] bg-white pt-[3px] pl-6 text-[15px] leading-5 whitespace-pre">{"Multisim  -  2020年6月6日, 10:57:36"}</output>
        </div>
        <div className="flex items-start gap-[2px] text-[14px] leading-[18px]" role="tablist">
          <button role="tab" aria-selected="true" className="-mr-[2px] h-[24px] w-[49px] border-b-2 border-l border-b-[#696969] border-l-white bg-[#f0f0f0] pt-[2px] pr-2">结果</button>
          {RESULT_TABS.map(([t, w]) => (
            <button key={t} role="tab" aria-selected="false" className={`${w} h-[22px] border-r-2 border-b-2 border-l border-r-[#808080] border-b-[#808080] border-l-[#c0c0c0] pl-1 text-left`}>{t}</button>
          ))}
        </div>
      </div>
    </section>
  );
}

function StatusBar() {
  const bars = ["#8fb3d0", "#d0a080", "#9a9ad0", "#b0d0a0", "#d0b0b0", "#a0c0d0"];
  return (
    <footer className="relative flex h-[23px] items-center border-t border-[#a0a0a0] pl-[2px] text-[15px] leading-5">
      <span className="flex-1">如需帮助，,请按 F1</span>
      <span className="w-[38px] border-r border-[#d0d0d0]">-</span>
      <span className="h-5 w-[123px] border-r border-[#d0d0d0]" />
      <span className="w-[123px] border-r border-[#d0d0d0] pl-[5px]">传递: 11.510 s</span>
      <span className="flex w-[64px] gap-[7px] pl-[6px]">
        {bars.map((c) => <span key={c} className="h-3 w-px" style={{ backgroundColor: c }} />)}
      </span>
      <span className="absolute top-[2px] right-[1px] text-[15px] leading-5 text-white/70 [text-shadow:0_0_2px_#b0b0b0]">https://blog.csdn.net/m0_50827783</span>
    </footer>
  );
}

export default function App() {
  return (
    <div className="min-h-screen bg-white p-[9px] font-['Open_Sans','Noto_Sans_CJK_SC',sans-serif] text-black">
      <div className="flex min-h-[calc(100vh-18px)] flex-col bg-[#f0f0f0]">
        <TitleBar />
        <MenuBar />
        <Toolbars />
        <div className="flex flex-1">
          <DesignToolbox />
          <Workspace />
          <InstrumentStrip />
        </div>
        <ResultsPane />
        <StatusBar />
      </div>
    </div>
  );
}
